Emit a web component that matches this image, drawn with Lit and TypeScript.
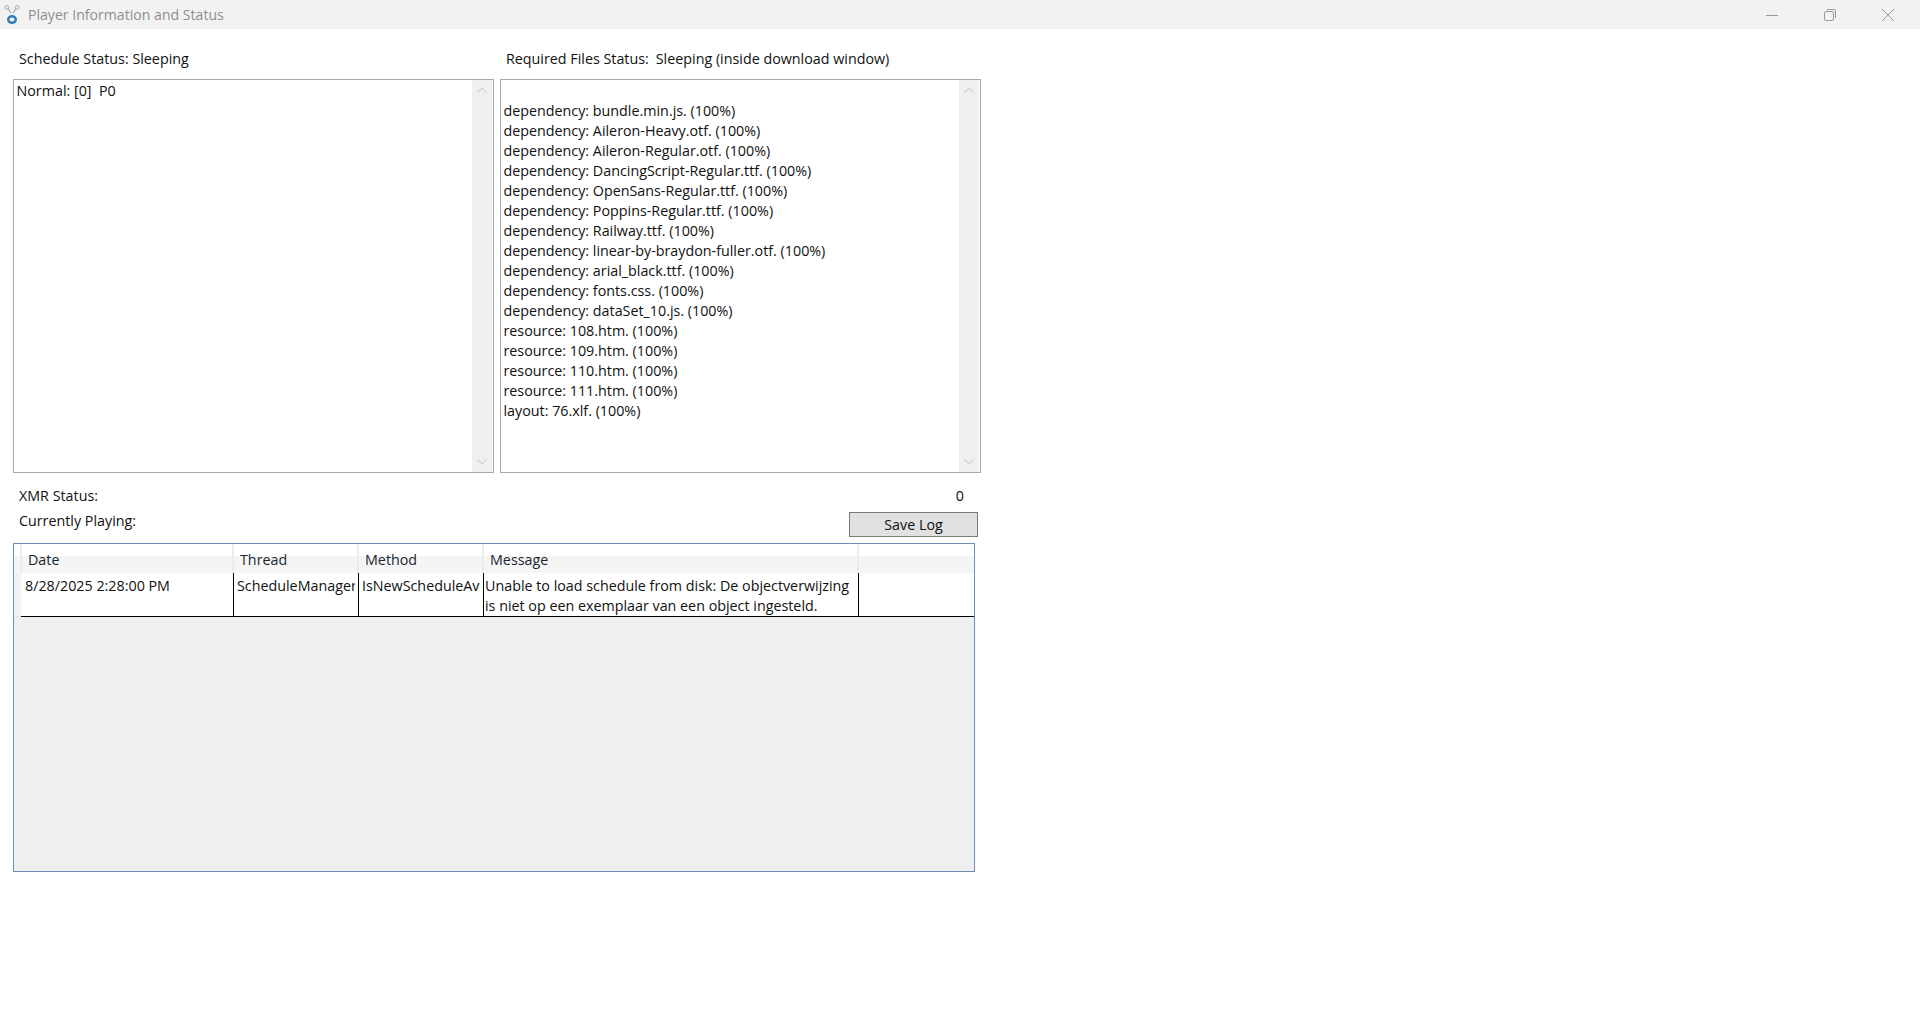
import { LitElement, html, css, svg } from "lit";
import { customElement } from "lit/decorators.js";

const files = [
  "dependency: bundle.min.js. (100%)",
  "dependency: Aileron-Heavy.otf. (100%)",
  "dependency: Aileron-Regular.otf. (100%)",
  "dependency: DancingScript-Regular.ttf. (100%)",
  "dependency: OpenSans-Regular.ttf. (100%)",
  "dependency: Poppins-Regular.ttf. (100%)",
  "dependency: Railway.ttf. (100%)",
  "dependency: linear-by-braydon-fuller.otf. (100%)",
  "dependency: arial_black.ttf. (100%)",
  "dependency: fonts.css. (100%)",
  "dependency: dataSet_10.js. (100%)",
  "resource: 108.htm. (100%)",
  "resource: 109.htm. (100%)",
  "resource: 110.htm. (100%)",
  "resource: 111.htm. (100%)",
  "layout: 76.xlf. (100%)",
];

const chevUp = svg`<svg width="12" height="8" viewBox="0 0 12 8"><path d="M1.500 6.500 6 2l4.500 4.500" fill="none" stroke="#d2d2d2" stroke-width="1.200"/></svg>`;
const chevDown = svg`<svg width="12" height="8" viewBox="0 0 12 8"><path d="M1.500 1.500 6 6l4.500-4.500" fill="none" stroke="#d2d2d2" stroke-width="1.200"/></svg>`;

@customElement("app-root")
export class AppRoot extends LitElement {
  static styles = css`
    :host {
      display: block;
      width: 1920px;
      height: 1020px;
      background: #fff;
      font-family: "Open Sans", "Noto Sans", sans-serif;
      font-size: 14.3px;
      line-height: 20px;
      color: #111;
      overflow: hidden;
    }
    .titlebar {
      height: 29px;
      background: #f2f2f2;
      display: flex;
      align-items: center;
      padding: 0 3px 0 4px;
      color: #8f8f8f;
    }
    .titlebar .app-icon { margin-right: 7px; }
    .titlebar .title { flex: 1; font-size: 14.1px; }
    .win {
      width: 58px;
      height: 29px;
      display: flex;
      align-items: center;
      justify-content: center;
    }
    .content { padding: 20px 0 0 13px; width: 975px; }
    .status-row {
      display: grid;
      grid-template-columns: 487px 1fr;
      height: 20px;
      padding-left: 6px;
    }
    .status-row .req { display: flex; gap: 7px; }
    .boxes {
      display: grid;
      grid-template-columns: 481px 481px;
      gap: 6px;
      margin-top: 10px;
    }
    .box {
      height: 394px;
      box-sizing: border-box;
      border: 1px solid #a8a8a8;
      display: flex;
    }
    .box-text { flex: 1; padding: 1px 0 0 2.500px; white-space: pre; overflow: hidden; }
    .scroll {
      width: 20px;
      margin-right: 1px;
      background: #f0f0f0;
      display: flex;
      flex-direction: column;
      justify-content: space-between;
      align-items: center;
    }
    .arrow {
      height: 20px;
      display: flex;
      align-items: center;
      justify-content: center;
    }
    .info {
      position: relative;
      height: 70px;
      padding-left: 6px;
    }
    .xmr {
      display: flex;
      justify-content: space-between;
      padding: 13px 8px 0 0;
      width: 953px;
      box-sizing: border-box;
    }
    .playing { margin-top: 5px; }
    .save {
      position: absolute;
      left: 836px;
      top: 39px;
      width: 129px;
      height: 25px;
      box-sizing: border-box;
      border: 1px solid #7a7a7a;
      background: #e1e1e1;
      font: inherit;
      color: inherit;
      padding: 0;
    }
    .grid {
      width: 962px;
      height: 329px;
      box-sizing: border-box;
      border: 1px solid #6d8fb5;
      background: #efefef;
    }
    .head {
      display: grid;
      grid-template-columns: 7px 213px 125px 125px 375px 1fr;
      height: 29px;
      background: linear-gradient(#fff 0 12px, #f5f5f5 12px);
    }
    .head div {
      box-sizing: border-box;
      padding: 6px 0 0 6px;
      border-right: 2px solid #ececec;
      color: #1a2733;
    }
    .head div:nth-child(2) { padding-left: 7px; }
    .head div:last-child { border-right: 0; }
    .row {
      display: grid;
      grid-template-columns: 7px 1fr;
      height: 44px;
    }
    .gutter { background: #f2f2f2; border-bottom: 1px solid #e4e4e4; }
    .cells {
      display: grid;
      grid-template-columns: 213px 125px 125px 375px 1fr;
      background: #fff;
      box-sizing: border-box;
      border-bottom: 1px solid #000;
    }
    .cell {
      box-sizing: border-box;
      border-right: 1px solid #000;
      padding: 3px 3px 0 3px;
      min-width: 0;
    }
    .cell.first { padding-left: 4px; }
    .clip { overflow: hidden; white-space: nowrap; }
    .cell.msg { padding: 3px 3px 0 1px; }
    .cell:last-child { border-right: 0; }
  `;

  render() {
    return html`
      <div class="titlebar">
        <svg class="app-icon" width="17" height="20" viewBox="0 0 17 20">
          <circle cx="2.800" cy="2.500" r="1.900" fill="none" stroke="#a9a9a9" stroke-width="1"/>
          <circle cx="13" cy="2.500" r="1.900" fill="none" stroke="#a9a9a9" stroke-width="1"/>
          <path d="M4.200 4 7 8M11.800 4 9 8" stroke="#a9a9a9" stroke-width="1.200"/>
          <ellipse cx="8" cy="14.500" rx="3.800" ry="3.300" fill="none" stroke="#2f7db5" stroke-width="2.400"/>
        </svg>
        <span class="title">Player Information and Status</span>
        <div class="win"><svg width="14" height="14" viewBox="0 0 14 14"><path d="M1 7.500h12" stroke="#999" stroke-width="1"/></svg></div>
        <div class="win"><svg width="14" height="14" viewBox="0 0 14 14"><rect x="1.500" y="3.500" width="9" height="9" rx="1.500" fill="none" stroke="#999"/><path d="M4 1.500h7a1.500 1.500 0 0 1 1.500 1.500v7" fill="none" stroke="#999"/></svg></div>
        <div class="win"><svg width="14" height="14" viewBox="0 0 14 14"><path d="M1 1l12 12M13 1 1 13" stroke="#999" stroke-width="1"/></svg></div>
      </div>
      <div class="content">
        <div class="status-row">
          <span>Schedule Status: Sleeping</span>
          <span class="req"><span>Required Files Status:</span><span>Sleeping (inside download window)</span></span>
        </div>
        <div class="boxes">
          <div class="box">
            <div class="box-text">Normal: [0]  P0</div>
            <div class="scroll"><div class="arrow">${chevUp}</div><div class="arrow">${chevDown}</div></div>
          </div>
          <div class="box">
            <div class="box-text"><div>&nbsp;</div>${files.map((f) => html`<div>${f}</div>`)}</div>
            <div class="scroll"><div class="arrow">${chevUp}</div><div class="arrow">${chevDown}</div></div>
          </div>
        </div>
        <div class="info">
          <div class="xmr"><span>XMR Status:</span><span>0</span></div>
          <div class="playing">Currently Playing:</div>
          <button class="save">Save Log</button>
        </div>
        <div class="grid">
          <div class="head"><div></div><div>Date</div><div>Thread</div><div>Method</div><div>Message</div><div></div></div>
          <div class="row">
            <div class="gutter"></div>
            <div class="cells">
              <div class="cell first"><div class="clip">8/28/2025 2:28:00 PM</div></div>
              <div class="cell"><div class="clip">ScheduleManager</div></div>
              <div class="cell"><div class="clip">IsNewScheduleAvailable</div></div>
              <div class="cell msg">Unable to load schedule from disk: De objectverwijzing is niet op een exemplaar van een object ingesteld.</div>
              <div class="cell"></div>
            </div>
          </div>
        </div>
      </div>
    `;
  }
}
